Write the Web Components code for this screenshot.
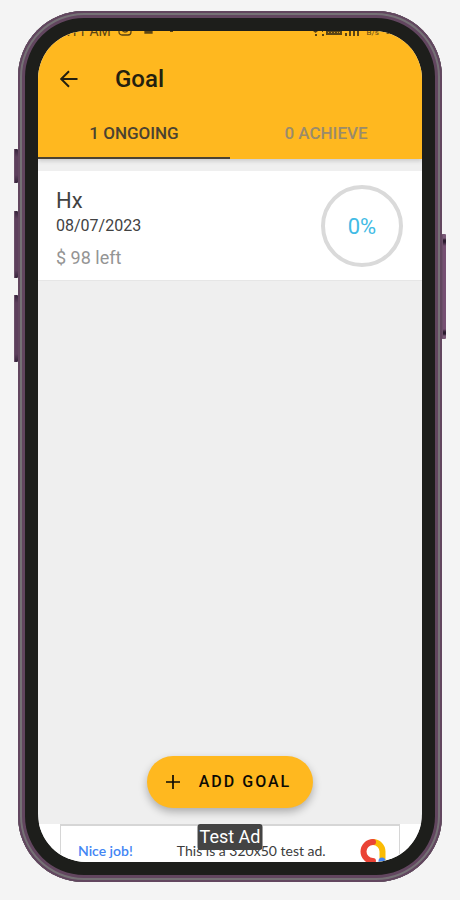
<!DOCTYPE html>
<html lang="en">
<head>
<meta charset="utf-8">
<meta name="viewport" content="width=device-width, initial-scale=1">
<title>Goal</title>
<style>
  html, body { margin: 0; background: #f4f4f4; }
  body { font-family: Roboto, "Liberation Sans", sans-serif; color: #424242; }
</style>
</head>
<body>
<phone-frame>
  <status-bar></status-bar>
  <app-bar>Goal</app-bar>
  <tab-strip>
    <tab-item selected>1 ONGOING</tab-item>
    <tab-item>0 ACHIEVE</tab-item>
  </tab-strip>
  <goal-list>
    <goal-card percent="0">
      <span slot="name">Hx</span>
      <span slot="date">08/07/2023</span>
      <span slot="left">$ 98 left</span>
    </goal-card>
    <add-button slot="action">ADD GOAL</add-button>
  </goal-list>
  <ad-banner>
    <span slot="tag">Test Ad</span>
    <span slot="lead">Nice job!</span>
    <span slot="body">This is a 320x50 test ad.</span>
  </ad-banner>
</phone-frame>

<script>
const define = (name, html, setup) => {
  const template = document.createElement('template');
  template.innerHTML = html;
  customElements.define(name, class extends HTMLElement {
    constructor() {
      super();
      this.attachShadow({ mode: 'open' }).append(template.content.cloneNode(true));
    }
    connectedCallback() { if (setup) setup(this, this.shadowRoot); }
  });
};

define('phone-frame', `
  <style>
    :host { display: flex; box-sizing: border-box; min-height: 100vh; padding: 11px 18px 18px; }
    .body { position: relative; flex: 1; min-width: 0; display: flex; padding: 20px; border-radius: 66px; background: #1d1e1b;
      box-shadow: inset 0 0 0 2px #62465f, inset 0 0 0 4px #757175, inset 0 0 0 7px #62465f; }
    .screen { flex: 1; min-width: 0; display: flex; flex-direction: column; overflow: hidden;
      border-radius: 48px; background: #efefef; }
    .key { position: absolute; width: 4px; border-radius: 1px; background: linear-gradient(#35243a, #5d3f5c 8px, #5d3f5c calc(100% - 8px), #35243a);
      box-shadow: inset 1px 0 #6b5069; }
    .left { right: 100%; }
    .right { left: 100%; background: linear-gradient(#7b5a78 4px, #2c1a2e 6px, #2c1a2e 8px, #764f72 12px, #764f72 calc(100% - 10px), #2c1a2e calc(100% - 7px), #2c1a2e calc(100% - 5px), #7b5a78 calc(100% - 3px)); }
    .mute { top: 138px; height: 34px; }
    .up { top: 200px; height: 67px; }
    .down { top: 284px; height: 67px; }
    .power { top: 223px; height: 105px; }
  </style>
  <div class="body">
    <i class="key left mute"></i><i class="key left up"></i><i class="key left down"></i><i class="key right power"></i>
    <div class="screen"><slot></slot></div>
  </div>`);

define('status-bar', `
  <style>
    :host { display: flex; align-items: flex-end; height: 5px; overflow: hidden; background: #ffb81f;
      padding: 0 26px 0 21px; font-size: 14px; line-height: 10px; color: #5b4415; }
    svg { display: block; flex: none; }
    .icons { margin-left: 7px; }
    .right { margin-left: auto; }
    small { font-size: 8px; line-height: 6px; margin: 0 7px 0 6px; }
  </style>
  <span>7:11 AM</span>
  <svg class="icons" width="62" height="14" viewBox="0 0 62 14" fill="none" stroke="#5b4415" stroke-width="1.3">
    <rect x="1" y="1" width="12" height="12" rx="3"/><circle cx="7" cy="7" r="3"/>
    <path d="M27 9h7v2h-7z" fill="#5b4415"/><path d="M52 9.500h3" stroke-width="1"/>
  </svg>
  <svg class="right" width="48" height="12" viewBox="0 0 48 12" fill="#5b4415">
    <path d="M0 7h5L2.500 9zM2 10h2v2H2zM9 6h1v2H9zM9 10h2v2H9zM13 5h16v6H13zM32 9h2v3h-2zM36 6h2v6h-2zM40 4h2v8h-2zM44 2h2v10h-2z"/>
    <path d="M15 8h1v1h-1zM18 8h1v1h-1zM21 8h1v1h-1zM24 8h1v1h-1zM26 8h1v1h-1z" fill="#d49b24"/>
  </svg>
  <small>B/s</small>
  <svg width="10" height="12" viewBox="0 0 10 12"><rect y="2" width="10" height="8" rx="2" fill="#5b4415"/></svg>`);

define('app-bar', `
  <style>
    :host { position: relative; z-index: 1; display: flex; box-sizing: border-box; align-items: center; gap: 32px;
      height: 73px; padding: 13px 17px 0; background: #ffb81f; color: #24200f; }
    button { display: flex; padding: 0; border: 0; background: none; color: inherit; width: 28px; justify-content: center; }
    h1 { margin: 0; font-size: 24px; line-height: 32px; font-weight: 500; }
  </style>
  <button aria-label="Back"><svg width="20" height="20" viewBox="0 0 20 20" fill="none" stroke="currentColor" stroke-width="2"><path d="M18.500 10H2.500M10 2.200L2.200 10l7.800 7.800"/></svg></button>
  <h1><slot></slot></h1>`);

define('tab-strip', `
  <style>
    :host { display: flex; position: relative; height: 50px; background: #ffb81f; box-shadow: 0 2px 4px rgba(60,60,60,.2); }
  </style><slot></slot>`);

define('tab-item', `
  <style>
    :host { flex: 1; display: flex; }
    button { flex: 1; padding: 0; border: 0; border-bottom: 2px solid transparent; background: none;
      font: 500 17px/20px Roboto, "Liberation Sans", sans-serif; color: #9a8b6b; }
    :host([selected]) button { color: #4b4231; border-color: #4b4231; }
  </style>
  <button><slot></slot></button>`);

define('goal-list', `
  <style>
    :host { flex: 1; display: flex; flex-direction: column; justify-content: space-between; padding: 12px 0 16px; }
    .action { display: flex; justify-content: center; }
  </style>
  <div><slot></slot></div>
  <div class="action"><slot name="action"></slot></div>`);

define('goal-card', `
  <style>
    :host { display: flex; align-items: center; justify-content: space-between; background: #fff;
      padding: 14px 19px 13px 18px; border-bottom: 1px solid #e6e6e6; }
    .text { display: flex; flex-direction: column; }
    .name { font-size: 22px; line-height: 28px; padding-top: 2px; }
    .date { font-size: 16px; line-height: 22px; }
    .left { font-size: 18px; line-height: 18px; margin-top: 12px; color: #949494; }
    .ring { box-sizing: border-box; width: 82px; height: 82px; border: 4px solid #dadada; border-radius: 50%;
      display: grid; place-items: center; font-size: 22px; color: #42bbe5; }
  </style>
  <div class="text">
    <div class="name"><slot name="name"></slot></div>
    <div class="date"><slot name="date"></slot></div>
    <div class="left"><slot name="left"></slot></div>
  </div>
  <div class="ring"></div>`,
  (host, root) => { root.querySelector('.ring').textContent = host.getAttribute('percent') + '%'; });

define('add-button', `
  <style>
    :host { display: block; }
    button { display: flex; align-items: center; gap: 18px; height: 52px; padding: 0 22px 0 18px; border: 0; border-radius: 26px;
      background: #ffb81f; color: #0c0a04; font: 500 16px/20px Roboto, "Liberation Sans", sans-serif; letter-spacing: 2px;
      box-shadow: 0 4px 8px rgba(0,0,0,.28); }
  </style>
  <button><svg width="16" height="16" viewBox="0 0 16 16" stroke="currentColor" stroke-width="1.700"><path d="M1 8h14M8 1v14"/></svg><slot></slot></button>`);

define('ad-banner', `
  <style>
    :host { display: flex; height: 38px; padding: 0 22px; background: #fff; overflow: hidden; }
    .ad { position: relative; flex: 1; display: flex; align-items: flex-start; box-sizing: border-box; height: 50px;
      padding: 12px 12px 0 17px; border: 1px solid #d6d6d6; border-top-width: 2px; font: 14px/26px Lato, sans-serif; color: #3c3c3c; }
    a { color: #4285f4; text-decoration: none; font-weight: 600; }
    .copy { margin-left: 44px; white-space: nowrap; }
    svg { margin-left: auto; flex: none; }
    .tag { position: absolute; top: -2px; left: 50%; transform: translateX(-50%); padding: 0 2px; white-space: nowrap;
      border-radius: 3px; background: #444; color: #fff; font: 18px/26px Roboto, "Liberation Sans", sans-serif; }
  </style>
  <div class="ad">
    <a href="#"><slot name="lead"></slot></a>
    <span class="copy"><slot name="body"></slot></span>
    <svg width="28" height="30" viewBox="0 0 28 30" fill="none" stroke-width="6" stroke-linecap="round">
      <path d="M14 4a9.500 9.500 0 0 1 9.500 9.500V23" stroke="#fbbc04"/>
      <path d="M14 23a9.500 9.500 0 0 1 0-19" stroke="#ea4335"/>
      <circle cx="23" cy="23" r="3.500" fill="#4285f4"/>
    </svg>
    <span class="tag"><slot name="tag"></slot></span>
  </div>`);
</script>
</body>
</html>
